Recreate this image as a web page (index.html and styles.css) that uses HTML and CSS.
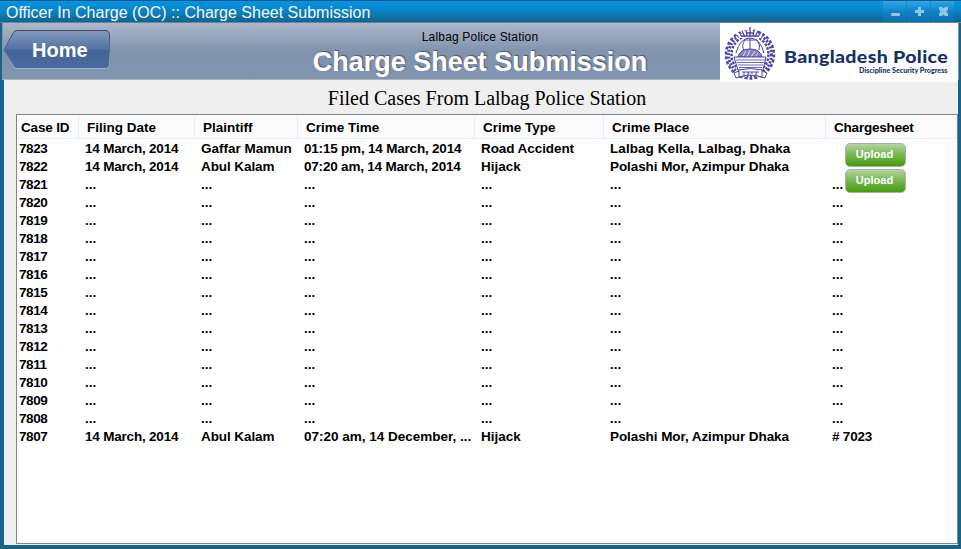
FILE: index.html
```html
<!DOCTYPE html>
<html lang="en">
<head>
<meta charset="utf-8">
<title>Officer In Charge (OC) :: Charge Sheet Submission</title>
<link rel="stylesheet" href="styles.css">
</head>
<body>
<div class="window">
  <div class="titlebar">
    <span class="title">Officer In Charge (OC) :: Charge Sheet Submission</span>
    <div class="controls">
      <span class="ctl"><svg width="23" height="22"><rect x="8" y="13" width="9" height="3" rx="1"/></svg></span>
      <span class="ctl"><svg width="23" height="22"><path d="M11 7h3v3h3v3h-3v3h-3v-3H8v-3h3z"/></svg></span>
      <span class="ctl"><svg width="23" height="22"><path d="M8 7h3l1.500 1.500L14 7h3v2.500L15.500 11.500 17 13.500V16h-3l-1.500-1.500L11 16H8v-2.500L9.500 11.500 8 9.500z"/></svg></span>
    </div>
  </div>
  <header class="header">
    <a class="home">
      <svg width="108" height="42">
        <defs><linearGradient id="hg" x1="0" y1="0" x2="0" y2="1">
          <stop offset="0" stop-color="#839bbd"/><stop offset=".49" stop-color="#5472a4"/><stop offset=".51" stop-color="#45659a"/><stop offset="1" stop-color="#4b6b9d"/>
        </linearGradient>
        <linearGradient id="he" x1="0" y1="0" x2="0" y2="1">
          <stop offset="0" stop-color="#3d4652"/><stop offset=".5" stop-color="#526b90"/><stop offset="1" stop-color="#a5b6cf"/>
        </linearGradient></defs>
        <path d="M13.500 1.500H102q4.500 0 4.500 4.500V35q0 4.500-4.500 4.500H13.500Q11.500 39.500 10.500 37.500L1.500 22Q1 21 1.500 20L10.500 3.500Q11.500 1.500 13.500 1.500Z" fill="url(#hg)" stroke="url(#he)"/>
      </svg>
      <span class="home-label">Home</span>
    </a>
    <div class="heading">
      <div class="station">Lalbag Police Station</div>
      <h1>Charge Sheet Submission</h1>
    </div>
    <div class="brand">
      <svg width="238" height="59" viewBox="0 0 238 59">
        <g fill="none" stroke="#4b48a6">
          <circle cx="30" cy="31.500" r="18.500" stroke-width="2.500" stroke-dasharray="2.500 1.500"/>
          <circle cx="30" cy="31.500" r="21.500" stroke-width="3" stroke-dasharray="2 1.500"/>
          <circle cx="30" cy="31.500" r="24" stroke-width="2.500" stroke-dasharray="3 2"/>
        </g>
        <path d="M19 15L17 9l5 2 1-4 4 1 3-4 3 4 4-1 1 4 5-2-2 6z" fill="#fff"/>
        <path d="M22 14l-3-5M25 14l-3-6M27 13l-1-6M30 13V4M33 13l1-6M35 14l3-6M38 14l3-5M26 10h8M22 13h16" fill="none" stroke="#4b48a6" stroke-width="1.300"/>
        <circle cx="30" cy="31" r="17" fill="#fff"/>
        <g fill="none" stroke="#4b48a6">
          <path d="M16 30Q20 15 30 15T44 30M24 28Q21 22 25 17H37Q41 22 39 27M30 15v11"/>
          <path d="M18 34Q20 26 30 26T42 34Z" fill="#8583c4"/>
          <path d="M23 33l3-5M27 34l3-7M31 34l4-6M35 34l3-4" stroke="#fff" stroke-width=".7"/>
          <path d="M14 34H46L43 47H18Z" fill="#fff"/>
          <path d="M16 37H45M17 39.500H44M18 42H43M19 44.500H42" stroke="#6b68b8"/>
          <path d="M19 47Q30 44 42 47V54Q30 50 19 54ZM19 48l-5 2 2 5 4-1M42 48l5 2-2 5-4-1" fill="#fff"/>
          <path d="M22 49h17M24 49v3M28 49q2 3-1 2M32 49v2M36 49q2 3-1 2"/>
        </g>
        <text class="brand-name" x="64" y="40" textLength="164" lengthAdjust="spacingAndGlyphs">Bangladesh Police</text>
        <text class="brand-tag" x="139" y="50" textLength="88.500" lengthAdjust="spacingAndGlyphs">Discipline Security Progress</text>
      </svg>
    </div>
  </header>
  <main class="content">
    <h2>Filed Cases From Lalbag Police Station</h2>
    <div class="table">
      <div class="row head"><span>Case ID</span><span>Filing Date</span><span>Plaintiff</span><span>Crime Time</span><span>Crime Type</span><span>Crime Place</span><span class="tight">Chargesheet</span></div>
      <div class="row"><span>7823</span><span class="tight">14 March, 2014</span><span>Gaffar Mamun</span><span class="tight">01:15 pm, 14 March, 2014</span><span class="snug">Road Accident</span><span class="loose">Lalbag Kella, Lalbag, Dhaka</span><span></span></div>
      <div class="row"><span>7822</span><span class="tight">14 March, 2014</span><span class="snug">Abul Kalam</span><span class="tight">07:20 am, 14 March, 2014</span><span>Hijack</span><span class="snug">Polashi Mor, Azimpur Dhaka</span><span></span></div>
      <div class="row"><span>7821</span><span>...</span><span>...</span><span>...</span><span>...</span><span>...</span><span>...</span></div>
      <div class="row"><span>7820</span><span>...</span><span>...</span><span>...</span><span>...</span><span>...</span><span>...</span></div>
      <div class="row"><span>7819</span><span>...</span><span>...</span><span>...</span><span>...</span><span>...</span><span>...</span></div>
      <div class="row"><span>7818</span><span>...</span><span>...</span><span>...</span><span>...</span><span>...</span><span>...</span></div>
      <div class="row"><span>7817</span><span>...</span><span>...</span><span>...</span><span>...</span><span>...</span><span>...</span></div>
      <div class="row"><span>7816</span><span>...</span><span>...</span><span>...</span><span>...</span><span>...</span><span>...</span></div>
      <div class="row"><span>7815</span><span>...</span><span>...</span><span>...</span><span>...</span><span>...</span><span>...</span></div>
      <div class="row"><span>7814</span><span>...</span><span>...</span><span>...</span><span>...</span><span>...</span><span>...</span></div>
      <div class="row"><span>7813</span><span>...</span><span>...</span><span>...</span><span>...</span><span>...</span><span>...</span></div>
      <div class="row"><span>7812</span><span>...</span><span>...</span><span>...</span><span>...</span><span>...</span><span>...</span></div>
      <div class="row"><span>7811</span><span>...</span><span>...</span><span>...</span><span>...</span><span>...</span><span>...</span></div>
      <div class="row"><span>7810</span><span>...</span><span>...</span><span>...</span><span>...</span><span>...</span><span>...</span></div>
      <div class="row"><span>7809</span><span>...</span><span>...</span><span>...</span><span>...</span><span>...</span><span>...</span></div>
      <div class="row"><span>7808</span><span>...</span><span>...</span><span>...</span><span>...</span><span>...</span><span>...</span></div>
      <div class="row"><span>7807</span><span class="tight">14 March, 2014</span><span class="snug">Abul Kalam</span><span>07:20 am, 14 December, ...</span><span>Hijack</span><span class="snug">Polashi Mor, Azimpur Dhaka</span><span class="tight"># 7023</span></div>
      <div class="uploads"><button>Upload</button><button>Upload</button></div>
    </div>
  </main>
</div>
</body>
</html>
```
FILE: styles.css
```css
* { box-sizing: border-box; }
body { margin: 0; font-family: "Liberation Sans", Arial, sans-serif; overflow: hidden; }
.window { width: 961px; height: 549px; background: #16638c; display: flex; flex-direction: column; }
.titlebar {
  height: 23px; flex: none; display: flex; justify-content: space-between;
  border-top: 1px solid #14587f; border-bottom: 1px solid #6f8493;
  background: linear-gradient(#0494e6, #0a84c9 45%, #13638f);
  padding: 0 7px 0 6px;
}
.title { color: #f4f8fb; font-size: 16px; line-height: 23px; white-space: pre; }
.controls { display: flex; gap: 1px; }
.ctl { width: 23px; height: 21px; background: linear-gradient(#2ea6ea, #0f80c0 55%, #0b70aa); }
.ctl svg { display: block; fill: #8cc6e8; margin-top: -1px; }
.header {
  height: 57px; flex: none; margin: 0 2px; display: flex; position: relative;
  background: linear-gradient(#abb8cc, #8193ad 50%, #8095b0);
  border: solid #8a939e; border-width: 0 1px 1px; border-bottom-color: #b0b4ba;
}
.home { position: relative; width: 108px; height: 42px; margin: 6px 0 0; }
.home svg { display: block; }
.home-label {
  position: absolute; left: 29px; top: 9px; color: #fff; font: bold 20px/24px "Liberation Sans", Arial, sans-serif;
}
.heading { width: 500px; margin-left: 119px; text-align: center; }
.station { font-size: 12px; line-height: 14px; margin-top: 7px; white-space: nowrap; letter-spacing: .18px; }
h1 {
  margin: 2px 0 0; color: #fff; font-size: 27px; line-height: 32px; white-space: nowrap;
  text-shadow: 1px -1px 1px #4b5a70;
}
.brand { position: absolute; right: 0; top: 0; width: 238px; height: 59px; background: #fff; }
.brand svg { display: block; }
.brand-name { font: 900 17.500px Lato, sans-serif; letter-spacing: .3px; fill: #15316a; }
.brand-tag { font: 900 7px Lato, sans-serif; fill: #15316a; }
.content { flex: 1; margin: 0 3px 4px 4px; background: #efefef; padding: 0 0 1px 12px; display: flex; flex-direction: column; }
h2 {
  margin: 0; height: 34px; font: 20px/36px "Liberation Serif", "Times New Roman", serif;
  text-align: center; white-space: nowrap;
}
.table { flex: 1; position: relative; border: 1px solid #7f8591; background: #fff; font-size: 13.500px; font-weight: bold; }
.row { display: grid; grid-template-columns: 62px 116px 103px 177px 129px 222px 131px; height: 18px; line-height: 19px; }
.row span { padding-left: 6px; white-space: nowrap; letter-spacing: 0; }
.row span:first-child { padding-left: 2px; letter-spacing: -.4px; }
.row .tight { letter-spacing: -.2px; }
.row .snug { letter-spacing: -.08px; }
.row .loose { letter-spacing: .07px; }
.row.head { height: 24px; line-height: 25px; background: #fcfcfc; border-bottom: 1px solid #e4eefc; }
.row.head span { padding-left: 8px; border-right: 1px solid #e4eefc; }
.row.head span:first-child { padding-left: 4px; letter-spacing: -.15px; }
.uploads { position: absolute; left: 828px; top: 28px; display: flex; flex-direction: column; gap: 2px; }
button {
  width: 61px; height: 24px; padding: 0 2px 2px 0; border: 1px solid #a9b3a5; border-radius: 5px; color: #fff;
  background: linear-gradient(#b4d4a0, #7bb856 45%, #459c10);
  font: bold 11px "Liberation Sans", Arial, sans-serif;
}
```
